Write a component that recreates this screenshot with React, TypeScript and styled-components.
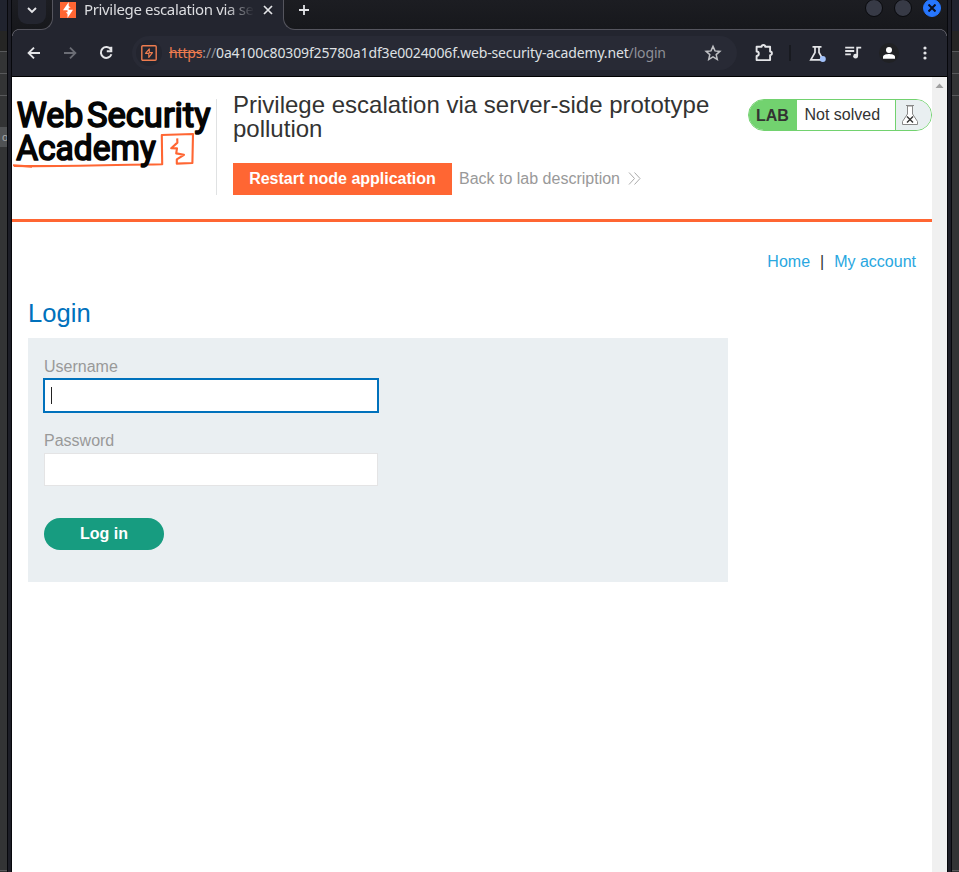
import React from "react";
import styled, { createGlobalStyle } from "styled-components";

const GlobalStyle = createGlobalStyle`
  * { box-sizing: border-box; }
  body { margin: 0; background: #fff; overflow: hidden; font-family: "Liberation Sans", Arial, sans-serif; }
`;

const Desktop = styled.div`
  display: flex;
  width: 959px;
  height: 872px;
  overflow: hidden;
  background: #333435;
`;

const Backdrop = styled.div`
  width: 7px;
  flex: none;
  display: flex;
  flex-direction: column;
  background: #333435;
`;

const BackdropBand = styled.div<{ $h: number; $color: string; $line?: boolean }>`
  height: ${(p) => p.$h}px;
  flex: none;
  background: ${(p) => p.$color};
  border-bottom: ${(p) => (p.$line ? "1px solid #58595b" : "none")};
  color: #aaa;
  font: 11px/20px "Liberation Sans", sans-serif;
  padding-left: 2px;
  overflow: hidden;
`;

const Frame = styled.div`
  width: 5px;
  flex: none;
  background: #1d1e27;
  border: solid #07080c;
  border-width: 0 1px;
`;

const BrowserWindow = styled.div`
  width: 935px;
  flex: none;
  display: flex;
  flex-direction: column;
  background: #23252f;
`;

const TabStrip = styled.div`
  height: 30px;
  flex: none;
  display: flex;
`;

const StripLeft = styled.div`
  width: 41px;
  background: linear-gradient(#1c1d22, #17181c);
  border: solid #55555e;
  border-width: 0 1px 1px 0;
  border-bottom-right-radius: 12px;
  padding-left: 6px;
`;

const TabSearch = styled.div`
  width: 28px;
  height: 24px;
  background: #23252f;
  border-radius: 0 0 9px 9px;
  display: flex;
  align-items: center;
  justify-content: center;
  padding-bottom: 4px;
`;

const Tab = styled.div`
  width: 230px;
  height: 20px;
  display: flex;
  align-items: center;
  justify-content: space-between;
  padding: 0 10px 0 7px;
`;

const TabTitle = styled.div`
  width: 171px;
  height: 20px;
  font: 15px/18px "Noto Sans", sans-serif;
  letter-spacing: -0.35px;
  color: #dcdde0;
  white-space: nowrap;
  overflow: hidden;
  mask-image: linear-gradient(to right, #000 142px, transparent 170px);
`;

const StripRight = styled.div`
  flex: 1;
  display: flex;
  justify-content: space-between;
  background: linear-gradient(#1c1d22, #17181c);
  border: solid #55555e;
  border-width: 0 0 1px 1px;
  border-bottom-left-radius: 12px;
  padding: 0 6px 0 14px;
`;

const NewTab = styled.div`
  height: 20px;
  display: flex;
  align-items: center;
`;

const WindowButtons = styled.div`
  display: flex;
  gap: 11px;
  margin-top: -1px;
`;

const WindowButton = styled.div<{ $close?: boolean }>`
  width: 18px;
  height: 18px;
  border-radius: 50%;
  background: ${(p) => (p.$close ? "#2777ff" : "#373a46")};
  border: 1px solid ${(p) => (p.$close ? "#2777ff" : "#090a0d")};
  display: flex;
  align-items: center;
  justify-content: center;
`;

const Toolbar = styled.div`
  height: 47px;
  flex: none;
  position: relative;
  display: flex;
  align-items: center;
  border-bottom: 1px solid #000;
  padding: 0 12px 0 12px;
`;

const Corner = styled.div<{ $side: "left" | "right" }>`
  position: absolute;
  top: -1px;
  ${(p) => p.$side}: 0;
  width: 7px;
  height: 7px;
  background: radial-gradient(
    circle at ${(p) => (p.$side === "left" ? "100%" : "0")} 100%,
    #23252f 5.7px, #55555e 6.2px, #55555e 6.7px, #17181c 7.2px
  );
`;

const NavIcons = styled.div`
  display: flex;
  flex: none;
  width: 108px;
  gap: 16px;
  align-items: center;
`;

const Address = styled.div`
  width: 605px;
  flex: none;
  height: 34px;
  border-radius: 17px;
  background: #282a35;
  display: flex;
  align-items: center;
  padding: 0 15px 0 4px;
`;

const SiteChip = styled.div`
  width: 26px;
  height: 26px;
  border-radius: 50%;
  background: #23252f;
  display: flex;
  align-items: center;
  justify-content: center;
  margin-right: 7px;
`;

const Url = styled.div`
  flex: 1;
  font: 14px/20px "Noto Sans", sans-serif;
  letter-spacing: -0.15px;
  color: #dfe0e3;
  white-space: nowrap;
`;

const Struck = styled.span`
  color: #ee7c4f;
  text-decoration: line-through;
`;

const Faint = styled.span`
  color: #8e9098;
`;

const ToolIcons = styled.div`
  flex: none;
  display: flex;
  align-items: center;
  padding-left: 17px;
`;

const ToolDivider = styled.div`
  width: 2px;
  height: 16px;
  background: #181a20;
  margin: 0 17px 0 15px;
`;

const Avatar = styled.div`
  width: 20px;
  height: 20px;
  border-radius: 50%;
  background: #202124;
  display: flex;
  align-items: center;
  justify-content: center;
  margin: 0 18px 0 17px;
`;

const QueueSlot = styled.div`
  display: flex;
  margin-left: 16px;
`;

const Viewport = styled.div`
  flex: 1;
  display: flex;
  background: #fff;
`;

const Page = styled.main`
  width: 920px;
`;

const Scrollbar = styled.div`
  width: 15px;
  background: #f0f0f0;
  display: flex;
  justify-content: center;
  padding-top: 6px;
`;

const LabHeader = styled.header`
  height: 145px;
  border-bottom: 3px solid #ff6633;
  display: flex;
`;

const LogoBox = styled.div`
  width: 205px;
  height: 96px;
  margin-top: 22px;
  border-right: 1px solid #e0e2e3;
`;

const LabInfo = styled.div`
  width: 500px;
  margin-left: 16px;
  padding-top: 16px;
`;

const LabTitle = styled.h2`
  margin: 0;
  font-size: 24px;
  line-height: 24px;
  font-weight: 400;
  color: #333332;
`;

const LabActions = styled.div`
  display: flex;
  margin-top: 22px;
  height: 32px;
  align-items: center;
`;

const RestartButton = styled.button`
  border: 0;
  width: 219px;
  height: 32px;
  padding: 0;
  background: #ff6633;
  color: #fff;
  font: bold 16px/32px "Liberation Sans", sans-serif;
`;

const BackLink = styled.a`
  display: flex;
  align-items: center;
  gap: 8px;
  margin-left: 7px;
  color: #999;
  font-size: 16px;
  line-height: 18px;

  svg {
    margin-bottom: 2px;
  }
`;

const LabStatus = styled.div`
  width: 184px;
  height: 32px;
  margin: 22px 0 0 auto;
  border: 1px solid #72d26f;
  border-radius: 16px;
  overflow: hidden;
  display: flex;
  font-size: 16px;
  line-height: 30px;
  color: #333332;
`;

const StatusTag = styled.div`
  width: 48px;
  padding-left: 7px;
  line-height: 32px;
  background: #72d26f;
  font-weight: bold;
`;

const StatusText = styled.div`
  width: 98px;
  padding-left: 7.5px;
`;

const StatusFlask = styled.div`
  flex: 1;
  background: #e9eff1;
  border-left: 1px solid #72d26f;
  padding: 4px 0 0 5px;
  line-height: 0;
`;

const PageNav = styled.nav`
  display: flex;
  justify-content: flex-end;
  gap: 10px;
  padding: 30px 16px 0 0;
  height: 76px;
  font-size: 16px;
  line-height: 20px;
  color: #333332;
`;

const NavLink = styled.a`
  color: #29a7df;
`;

const Heading = styled.h1`
  margin: 0 0 10px 16px;
  height: 30px;
  font-size: 25.6px;
  line-height: 30px;
  font-weight: 400;
  color: #0071bc;
`;

const LoginForm = styled.form`
  width: 700px;
  height: 244px;
  margin-left: 16px;
  padding: 19px 16px 0;
  background: #eaeff2;
`;

const Label = styled.label`
  display: block;
  height: 22px;
  font-size: 16px;
  line-height: 20px;
  color: #999;
`;

const Field = styled.div<{ $focused?: boolean }>`
  width: 334px;
  height: 33px;
  margin-bottom: 19px;
  background: #fff;
  border: 1px solid ${(p) => (p.$focused ? "#0071bc" : "#e4e4e5")};
  box-shadow: ${(p) => (p.$focused ? "0 0 0 1px #0071bc" : "none")};
  padding: 7px 6px;
`;

const Caret = styled.div`
  width: 1px;
  height: 17px;
  background: #222;
`;

const LoginButton = styled.button`
  display: block;
  width: 120px;
  height: 32px;
  margin-top: 32px;
  padding: 0;
  border: 0;
  border-radius: 16px;
  background: #179c80;
  color: #fff;
  font: bold 16px/32px "Liberation Sans", sans-serif;
`;

const Edge = ({ side }: { side: "left" | "right" }) => (
  <Backdrop>
    <BackdropBand $h={31} $color="#20232e" />
    <BackdropBand $h={21} $color="#252524" $line />
    <BackdropBand $h={22} $color="#333435" $line />
    <BackdropBand $h={22} $color="#333435" $line />
    <BackdropBand $h={31} $color="#333435" />
    <BackdropBand $h={20} $color={side === "left" ? "#505254" : "#333435"}>
      {side === "left" ? "o" : ""}
    </BackdropBand>
    <BackdropBand $h={724} $color="#333435" $line />
  </Backdrop>
);

const Logo = () => (
  <svg width="204" height="96" viewBox="12 99 204 96" overflow="visible">
    <g fill="none" stroke="#ff6633" strokeWidth="2.1" strokeLinejoin="round">
      <path d="M14 166 C55 166.8 110 165 162.2 164.2 L161.8 135 L193 134 L192.4 163 L176.8 163.6 L176.8 159.4 L184 154.8 L176.2 153.4 L177 148.4 L171.2 148.2 L177.4 142.6 L177.2 138.4" />
      <path d="M13 165.2 L32 166.6" />
    </g>
    <g fill="#050505" stroke="#050505" strokeWidth="1.7" strokeLinejoin="round" fontFamily="Roboto, sans-serif" fontWeight="400" fontSize="35.5">
      <text x="16.8" y="127" textLength="66.6" lengthAdjust="spacingAndGlyphs">Web</text>
      <text x="87" y="127" textLength="123.6" lengthAdjust="spacingAndGlyphs">Security</text>
      <text x="16.2" y="159.6" textLength="139.6" lengthAdjust="spacingAndGlyphs">Academy</text>
    </g>
  </svg>
);

const App = () => (
  <>
    <GlobalStyle />
    <Desktop>
      <Edge side="left" />
      <Frame />
      <BrowserWindow>
        <TabStrip>
          <StripLeft>
            <TabSearch>
              <svg width="10" height="8" viewBox="0 0 10 8" fill="none" stroke="#e4e5e8" strokeWidth="1.9"><path d="M1 2l4 4 4-4" /></svg>
            </TabSearch>
          </StripLeft>
          <Tab>
            <svg width="16" height="16" viewBox="0 0 16 16">
              <path fill="#ff6633" d="M0 0h16v16H0z" />
              <path fill="#fff" d="M8.7 0 3 8.2h4.5v2.1H5.8L7.5 12v4L13 7.8H8.7V5.7h2L8.7 4z" />
            </svg>
            <TabTitle>Privilege escalation via serv</TabTitle>
            <svg width="10" height="10" viewBox="0 0 10 10" stroke="#e4e5e8" strokeWidth="1.7"><path d="M1 1l8 8M9 1 1 9" /></svg>
          </Tab>
          <StripRight>
            <NewTab>
              <svg width="12" height="12" viewBox="0 0 12 12" stroke="#e4e5e8" strokeWidth="1.8"><path d="M6 1v10M1 6h10" /></svg>
            </NewTab>
            <WindowButtons>
              <WindowButton />
              <WindowButton />
              <WindowButton $close>
                <svg width="8" height="8" viewBox="0 0 8 8" stroke="#0b1020" strokeWidth="2"><path d="M.5.5l7 7M7.5.5l-7 7" /></svg>
              </WindowButton>
            </WindowButtons>
          </StripRight>
        </TabStrip>
        <Toolbar>
          <Corner $side="left" />
          <Corner $side="right" />
          <NavIcons>
            <svg width="20" height="20" viewBox="0 0 20 20" fill="none" stroke="#e4e5e8" strokeWidth="1.9"><path d="M16 10H5M10 4.6 4.6 10l5.4 5.4" /></svg>
            <svg width="20" height="20" viewBox="0 0 20 20" fill="none" stroke="#6b6d75" strokeWidth="1.8"><path d="M4 10h11M10 4.6l5.4 5.4-5.4 5.4" /></svg>
            <svg width="20" height="20" viewBox="0 0 20 20" fill="none" stroke="#e4e5e8" strokeWidth="2"><path d="M14.8 6.5A5.4 5.4 0 1 0 15.4 11.2M15.3 3.8v4.5h-4.5" /></svg>
          </NavIcons>
          <Address>
            <SiteChip>
              <svg width="16" height="16" viewBox="0 0 16 16" fill="none" stroke="#ee7c4f" strokeWidth="1.4" strokeLinejoin="round">
                <rect x=".8" y=".8" width="14.4" height="14.4" rx="1" />
                <path strokeWidth="1.1" d="M8.3 3.8 4.5 8.4h3.3v4L11.5 7.6H8.3z" />
              </svg>
            </SiteChip>
            <Url>
              <Struck>https</Struck><Faint>://</Faint>0a4100c80309f25780a1df3e0024006f.web-security-academy.net<Faint>/login</Faint>
            </Url>
            <svg width="18" height="18" viewBox="0 0 18 18" fill="none" stroke="#bfc0c4" strokeWidth="1.5"><path d="m9 2.4 2 4.5 4.9.5-3.7 3.2 1.1 4.8L9 12.9l-4.3 2.5 1.1-4.8-3.7-3.2L7 6.9z" /></svg>
          </Address>
          <ToolIcons>
            <svg width="20" height="20" viewBox="0 0 20 20" fill="none" stroke="#e4e5e8" strokeWidth="1.9" strokeLinejoin="round"><path d="M2.6 3.8h5a1.8 1.8 0 0 1 3.6 0h4.9v4.7a1.8 1.8 0 0 1 0 3.6v5H2.6v-4.2a2.2 2.2 0 0 0 0-4.4z" /></svg>
            <ToolDivider />
            <svg width="20" height="20" viewBox="0 0 20 20" fill="none" stroke="#e4e5e8" strokeWidth="1.7"><path d="M4.5 3.8h9M7 4v5.5L2.8 16.8h12.4L11 9.5V4" /><circle cx="14.8" cy="16" r="3" fill="#a2c2fa" stroke="none" /></svg>
            <QueueSlot>
              <svg width="18" height="18" viewBox="0 0 18 18" fill="none" stroke="#e4e5e8" strokeWidth="1.8"><path d="M1.2 3.6h9M1.2 7h9M1.2 10.4h5.6M13.2 12V3.6h4" /><circle cx="11.6" cy="12.2" r="2.4" fill="#e4e5e8" stroke="none" /></svg>
            </QueueSlot>
            <Avatar>
              <svg width="14" height="14" viewBox="0 0 14 14" fill="#fff"><circle cx="7" cy="4" r="3" /><path d="M1 12.8v-2C1 8.6 5 8 7 8s6 .6 6 2.8v2z" /></svg>
            </Avatar>
            <svg width="16" height="16" viewBox="0 0 16 16" fill="#e4e5e8"><circle cx="8" cy="3" r="1.6" /><circle cx="8" cy="8" r="1.6" /><circle cx="8" cy="13" r="1.6" /></svg>
          </ToolIcons>
        </Toolbar>
        <Viewport>
          <Page>
            <LabHeader>
              <LogoBox><Logo /></LogoBox>
              <LabInfo>
                <LabTitle>Privilege escalation via server-side prototype pollution</LabTitle>
                <LabActions>
                  <RestartButton>Restart node application</RestartButton>
                  <BackLink>
                    Back to lab description
                    <svg width="13" height="13" viewBox="0 0 13 13" fill="none" stroke="#aaa" strokeWidth="1"><path d="m1 .5 5.5 6L1 12.5M6.5.5l5.5 6-5.5 6" /></svg>
                  </BackLink>
                </LabActions>
              </LabInfo>
              <LabStatus>
                <StatusTag>LAB</StatusTag>
                <StatusText>Not solved</StatusText>
                <StatusFlask>
                  <svg width="18" height="22" viewBox="0 0 18 22" fill="none" stroke="#888" strokeWidth="1">
                    <path fill="#fff" d="M6.5 2v8L1.5 17.5v3h15v-3L11.5 10V2z" /><path d="M5 1.5h8" />
                    <path stroke="#333" strokeWidth="1.4" d="m6 12.5 6 6M12 12.5l-6 6" />
                  </svg>
                </StatusFlask>
              </LabStatus>
            </LabHeader>
            <PageNav><NavLink>Home</NavLink><span>|</span><NavLink>My account</NavLink></PageNav>
            <Heading>Login</Heading>
            <LoginForm>
              <Label>Username</Label>
              <Field $focused><Caret /></Field>
              <Label>Password</Label>
              <Field />
              <LoginButton type="button">Log in</LoginButton>
            </LoginForm>
          </Page>
          <Scrollbar>
            <svg width="9" height="5" viewBox="0 0 9 5" fill="#a0a0a0"><path d="M.5 5 4.5.5l4 4.5z" /></svg>
          </Scrollbar>
        </Viewport>
      </BrowserWindow>
      <Frame />
      <Edge side="right" />
    </Desktop>
  </>
);

export default App;
